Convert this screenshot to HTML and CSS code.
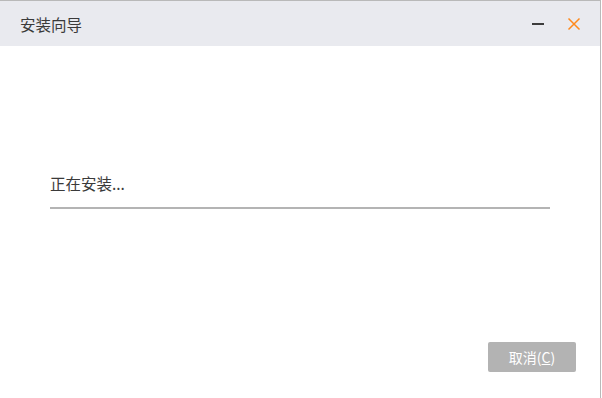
FILE: index.html
```html
<!DOCTYPE html>
<html lang="zh-CN">
<head>
  <meta charset="UTF-8">
  <title>安装向导</title>
  <link rel="stylesheet" href="styles.css">
</head>
<body>
  <div id="wizard">
    <div class="titlebar">
      <div class="title">安装向导</div>
      <div class="controls">
        <svg class="btn-min" width="12" height="12" viewBox="0 0 12 12"><rect x="0" y="5" width="12" height="2" fill="#3c3c3c"/></svg>
        <svg class="btn-close" width="14" height="14" viewBox="0 0 14 14"><path d="M1.5 1.5 L12.5 12.5 M12.5 1.5 L1.5 12.5" stroke="#ff8a1c" stroke-width="1.5" fill="none"/></svg>
      </div>
    </div>
    <div class="body">
      <div class="status">正在安装...</div>
      <div class="progress"></div>
    </div>
    <div class="footer">
      <button class="cancel">取消(<u>C</u>)</button>
    </div>
  </div>
</body>
</html>
```

FILE: styles.css
```css
html, body {
  margin: 0;
  padding: 0;
  background: #fff;
}

body {
  font-family: "Noto Sans CJK SC", "Liberation Sans", sans-serif;
}

#wizard {
  width: 601px;
  height: 398px;
  border-top: 1px solid #b9b9b9;
  border-right: 1px solid #b9b9b9;
  display: flex;
  flex-direction: column;
  box-sizing: border-box;
}

.titlebar {
  height: 45px;
  background: #e9eaef;
  display: flex;
  align-items: center;
  justify-content: space-between;
  padding: 0 19px 0 20px;
}

.title {
  font-size: 15.5px;
  color: #3a3a3a;
}

.controls {
  display: flex;
  align-items: center;
  gap: 23px;
}

.body {
  flex: 1;
  padding: 126px 50px 0 50px;
}

.status {
  font-size: 15.5px;
  color: #3a3a3a;
  line-height: 22px;
}

.progress {
  margin-top: 13px;
  height: 2px;
  background: #b4b4b4;
}

.footer {
  display: flex;
  justify-content: flex-end;
  padding: 0 24px 26px 0;
}

.cancel {
  width: 88px;
  height: 30px;
  border: none;
  border-radius: 2px;
  background: #b3b3b3;
  color: #fff;
  font-family: inherit;
  font-size: 14px;
  padding: 0;
}

.cancel u {
  text-decoration: underline;
}
```
